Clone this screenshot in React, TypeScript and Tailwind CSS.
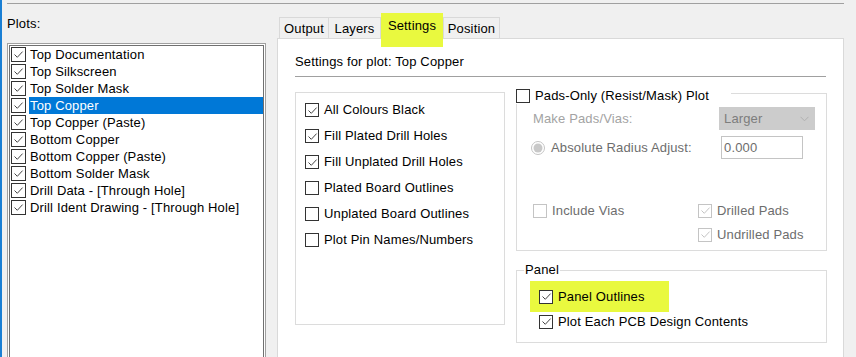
import React from "react";

function Check({
  checked,
  disabled,
  size = 14,
}: {
  checked?: boolean;
  disabled?: boolean;
  size?: number;
}) {
  const box = size === 15 ? "w-[15px] h-[15px]" : "w-[14px] h-[14px]";
  const border = disabled ? "border-[#c4c4c4]" : "border-[#333333]";
  return (
    <span className={`${box} ${border} border bg-white shrink-0 flex items-center justify-center`}>
      {checked && (
        <svg width="11" height="11" viewBox="0 0 11 11">
          <path
            d="M1.5 5.5 L4.3 8.3 L9.6 2.6"
            fill="none"
            stroke={disabled ? "#c4c4c4" : "#444444"}
            strokeWidth="1"
          />
        </svg>
      )}
    </span>
  );
}

const plots = [
  "Top Documentation",
  "Top Silkscreen",
  "Top Solder Mask",
  "Top Copper",
  "Top Copper (Paste)",
  "Bottom Copper",
  "Bottom Copper (Paste)",
  "Bottom Solder Mask",
  "Drill Data - [Through Hole]",
  "Drill Ident Drawing - [Through Hole]",
];

const options: [string, boolean][] = [
  ["All Colours Black", true],
  ["Fill Plated Drill Holes", true],
  ["Fill Unplated Drill Holes", true],
  ["Plated Board Outlines", false],
  ["Unplated Board Outlines", false],
  ["Plot Pin Names/Numbers", false],
];

export default function App() {
  return (
    <div className="w-[856px] h-[357px] overflow-hidden bg-[#f0f0f0] flex font-['Liberation_Sans',Arial,sans-serif] text-[13px] tracking-[0.15px] text-black">
      {/* blue window edge */}
      <div className="w-[2px] h-full bg-[#1a7fd4] shrink-0" />
      <div className="flex-1 flex flex-col">
        <div className="pt-[3px] pl-[5px]">
          <div className="w-[837px] h-px bg-[#a0a0a0]" />
        </div>
        <div className="flex flex-1">
          {/* left column */}
          <div className="w-[275px] shrink-0 flex flex-col pl-[5px]">
            <div className="mt-[12px] leading-[16px]">Plots:</div>
            <div className="mt-[11px] w-[259px] h-[330px] border border-[#a0a0a0] p-px bg-white">
              <div className="h-full border border-[#707070] bg-white">
                {plots.map((p, i) => (
                  <div key={p} className="h-[17px] flex items-center">
                    <span className="ml-[1px]">
                      <Check checked size={15} />
                    </span>
                    <span
                      className={
                        i === 3
                          ? "ml-[3px] flex-1 h-[17px] leading-[17px] pl-px bg-[#0078d7] text-white whitespace-nowrap"
                          : "ml-[3px] flex-1 h-[17px] leading-[17px] pl-px whitespace-nowrap"
                      }
                    >
                      {p}
                    </span>
                  </div>
                ))}
              </div>
            </div>
          </div>

          {/* tab control */}
          <div className="w-[567px] shrink-0 flex flex-col">
            <div className="mt-[9px] h-[25px] flex items-end pl-[2px] relative z-10">
              <div className="w-[50px] h-[21px] border border-b-0 border-[#d9d9d9] bg-[#f0f0f0] flex items-center justify-center leading-[16px] pt-px">
                Output
              </div>
              <div className="w-[52px] h-[21px] border border-l-0 border-b-0 border-[#d9d9d9] bg-[#f0f0f0] flex items-center justify-center leading-[16px] pt-px">
                Layers
              </div>
              <div className="w-[62px] h-[25px] relative flex justify-center">
                <span className="absolute left-0 top-0 w-[62px] h-[34px] bg-[#e9f93f]" />
                <span className="relative mt-[5px] leading-[16px]">Settings</span>
              </div>
              <div className="w-[57px] h-[21px] border border-b-0 border-[#d9d9d9] bg-[#f0f0f0] flex items-center justify-center leading-[16px] pt-px">
                Position
              </div>
            </div>
            <div className="flex-1 border border-b-0 border-[#d9d9d9] bg-white pl-[17px] pt-[15px]">
              <div className="leading-[16px]">Settings for plot: Top Copper</div>
              <div className="mt-[6px] w-[531px] h-px bg-[#a0a0a0]" />
              <div className="mt-[10px] flex items-start">
                {/* left group */}
                <div className="mt-[5px] w-[210px] h-[233px] border border-[#dcdcdc] pt-[4px] pl-[9px]">
                  {options.map(([label, c]) => (
                    <div key={label} className="h-[26px] flex items-center">
                      <Check checked={c} />
                      <span className="ml-[5px] whitespace-nowrap">{label}</span>
                    </div>
                  ))}
                </div>

                {/* right column */}
                <div className="ml-[11px] w-[311px] flex flex-col">
                  <div className="relative mt-[6px] h-[158px] border border-[#dcdcdc]">
                    <div className="absolute -left-px -top-[7px] flex items-center bg-white pr-[22px]">
                      <Check />
                      <span className="ml-[5px] leading-[16px] pt-px whitespace-nowrap">
                        Pads-Only (Resist/Mask) Plot
                      </span>
                    </div>
                    <div className="pl-[16px] pt-[13px]">
                      <div className="flex items-center h-[23px]">
                        <span className="w-[186px] text-[#a3a3a3]">Make Pads/Vias:</span>
                        <div className="w-[96px] h-[23px] bg-[#cccccc] flex items-center justify-between pl-[5px] pr-[6px]">
                          <span className="text-[#7d7d7d]">Larger</span>
                          <svg width="9" height="6" viewBox="0 0 9 6">
                            <path d="M0.5 0.8 L4.5 4.8 L8.5 0.8" fill="none" stroke="#b0b0b0" strokeWidth="1" />
                          </svg>
                        </div>
                      </div>
                      <div className="mt-[6px] flex items-center h-[23px] -ml-[2px]">
                        <div className="w-[190px] flex items-center">
                          <svg width="14" height="14" viewBox="0 0 14 14" className="shrink-0">
                            <circle cx="7" cy="7" r="6.5" fill="#ffffff" stroke="#c4c4c4" />
                            <circle cx="7" cy="7" r="4.5" fill="#c8c8c8" />
                          </svg>
                          <span className="ml-[6px] text-[#6d6d6d] whitespace-nowrap">Absolute Radius Adjust:</span>
                        </div>
                        <div className="w-[82px] h-[23px] border border-[#c4c4c4] bg-white pl-[2px] flex items-center text-[#6d6d6d]">
                          0.000
                        </div>
                      </div>
                      <div className="mt-[43px] flex items-center h-[17px]">
                        <div className="w-[165px] flex items-center">
                          <Check disabled />
                          <span className="ml-[5px] text-[#6d6d6d]">Include Vias</span>
                        </div>
                        <div className="flex items-center">
                          <Check disabled checked />
                          <span className="ml-[5px] text-[#6d6d6d]">Drilled Pads</span>
                        </div>
                      </div>
                      <div className="mt-[7px] flex items-center h-[17px] pl-[165px]">
                        <Check disabled checked />
                        <span className="ml-[5px] text-[#6d6d6d] whitespace-nowrap">Undrilled Pads</span>
                      </div>
                    </div>
                  </div>

                  <div className="relative mt-[19px] h-[73px] border border-[#dcdcdc]">
                    <span className="absolute left-[7px] -top-[9px] bg-white px-px leading-[16px]">Panel</span>
                    <span className="absolute left-[13px] top-[10px] w-[139px] h-[31px] bg-[#e9f93f]" />
                    <div className="relative pl-[22px] pt-[17px]">
                      <div className="flex items-center h-[17px]">
                        <Check checked />
                        <span className="ml-[5px] whitespace-nowrap">Panel Outlines</span>
                      </div>
                      <div className="mt-[8px] flex items-center h-[17px]">
                        <Check checked />
                        <span className="ml-[5px] whitespace-nowrap">Plot Each PCB Design Contents</span>
                      </div>
                    </div>
                  </div>
                </div>
              </div>
            </div>
          </div>
        </div>
      </div>
    </div>
  );
}
